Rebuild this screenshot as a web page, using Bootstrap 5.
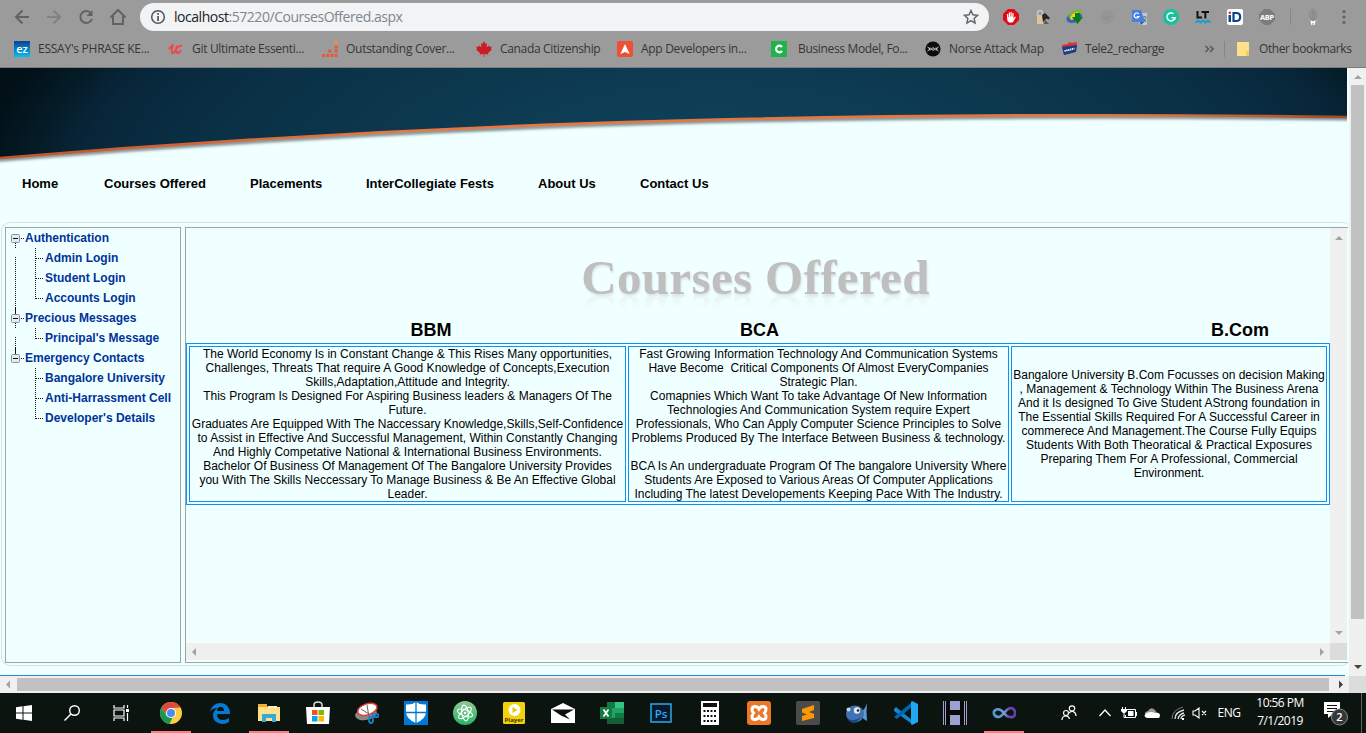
<!DOCTYPE html>
<html lang="en">
<head>
<meta charset="utf-8">
<meta name="viewport" content="width=device-width, initial-scale=1">
<title>Courses Offered</title>
<link href="https://cdn.jsdelivr.net/npm/bootstrap@5.3.0/dist/css/bootstrap.min.css" rel="stylesheet">
<script src="https://cdn.jsdelivr.net/npm/bootstrap@5.3.0/dist/js/bootstrap.bundle.min.js"></script>
<style>
html,body{width:1366px;height:733px;overflow:hidden}
body{background:#f0ffff;font-family:"Liberation Sans",Arial,sans-serif;font-size:12px;line-height:14px;color:#000}
svg{display:block;flex:none}
.chrome{height:68px;background:#9b9b9b;border-bottom:1px solid #7c7c7c;font-family:"Open Sans","Noto Sans",sans-serif}
.toolrow{height:34px;padding-left:6px}
.slot{width:32px;height:34px;display:flex;align-items:center;justify-content:center;flex:none}
.omni{width:849px;height:28px;margin-left:6px;background:#f1f3f4;border-radius:14px;padding:0 10px;font-size:14px;color:#80868b;letter-spacing:-.46px}
.omni b{font-weight:400;color:#202124}
.marks{height:33px;padding-left:14px;font-size:12px;color:#33363a;white-space:nowrap}
.bm{display:flex;align-items:center;gap:8px;height:30px;flex:none}
.browser-page{height:608px}
.sheet{width:1349px;height:608px;background:#f0ffff}
.hero{height:100px}
.topnav{display:grid;grid-template-columns:82px 146px 116px 172px 102px 90px;padding:8px 0 0 22px;height:54px;font-weight:700;font-size:13px;line-height:15px;white-space:nowrap}
.topnav a,.tree a{color:inherit;text-decoration:none}
.frame{height:444px;margin-left:1px;width:1348px;border:1px solid #d9dfe1;border-right:0;border-radius:9px 6px 8px 9px;padding:4px 0 0 3px}
.side{width:176px;height:436px;border:1px solid #9aa6a8;padding-left:5px;margin-right:4px}
.view{width:1163px;height:436px;border:1px solid #9aa6a8;border-right:0}
.tree{font-weight:700;color:#039;white-space:nowrap}
.tree div{display:flex;align-items:center;height:20px}
.canvas{width:1144px;height:415px}
.wordart{height:87px;padding-top:22px;padding-right:5px;text-align:center;font:700 49px/56px "Liberation Serif",serif;color:#bfbfbf}
.wordart span{display:inline-block;letter-spacing:.35px;text-shadow:1px 2px 2px #dbe6e6;-webkit-box-reflect:below -22px linear-gradient(transparent 55%,rgba(0,0,0,.3))}
.heads{display:grid;grid-template-columns:329.5px 471px 100px;padding-left:224.5px;height:28px;font-weight:700;font-size:18px;line-height:30px}
.courses{width:1144px;border:1px solid #0c92f5;border-collapse:separate;border-spacing:2px;table-layout:fixed;text-align:center}
.courses td{border:1px solid #0c92f5;padding:0;white-space:nowrap;vertical-align:middle}
.c1{width:437px}.c2{width:381px}.c3{width:316px}
.bar{background:#f0f0f0;display:flex;justify-content:space-between;align-items:center}
.bar.v{width:17px;flex-direction:column}
.bar.h{height:17px}
.corner{width:17px;height:17px;background:#dcdcdc}
.thumb{background:#c1c1c1}
.taskbar{height:40px;background:#0c1410;color:#fff;font-family:"Open Sans","Noto Sans",sans-serif}
.app{width:49px;height:40px;display:flex;align-items:center;justify-content:center;flex:none}
.app.s{width:48px}
.app.s.w{width:50px}
.app.on{background:linear-gradient(#ff7c80,#ff7c80) 5px 100%/40px 2px no-repeat}
.tr{height:40px;display:flex;align-items:center;justify-content:center;flex:none}
</style>
</head>
<body>
<header class="chrome">
  <div class="toolrow d-flex align-items-center">
    <div class="slot"><svg width="16" height="16" fill="none" stroke="#5f6368" stroke-width="2"><path d="M15 8H2M8.500 1.500 2 8l6.500 6.500"/></svg></div>
    <div class="slot"><svg width="16" height="16" fill="none" stroke="#7f8183" stroke-width="2"><path d="M1 8h13M7.500 1.500 14 8l-6.500 6.500"/></svg></div>
    <div class="slot"><svg width="16" height="16" fill="none" stroke="#5f6368" stroke-width="2"><path d="M13 4.200A6 6 0 1 0 14 10"/><path d="M14.500 1v6h-6z" fill="#5f6368" stroke="none"/></svg></div>
    <div class="slot"><svg width="18" height="18" fill="none" stroke="#5f6368" stroke-width="2"><path d="M1.500 9.500 9 2l7.500 7.500M4 8v8h10V8"/></svg></div>
    <div class="omni d-flex align-items-center">
      <svg width="16" height="16"><circle cx="8" cy="8" r="6.300" fill="none" stroke="#4f5357" stroke-width="1.500"/><path d="M7.200 7h1.700v5H7.200zM7.200 4h1.700v1.700H7.200z" fill="#4f5357"/></svg>
      <span class="ms-2 flex-grow-1"><b>localhost</b>:57220/CoursesOffered.aspx</span>
      <svg width="16" height="16" fill="none" stroke="#5f6368" stroke-width="1.400"><path d="m8 1.500 1.900 4.300 4.700.5-3.500 3.100 1 4.600L8 11.600 3.900 14l1-4.600L1.400 6.300l4.700-.5z"/></svg>
    </div>
    <div class="d-flex" style="margin-left:6px">
      <div class="slot"><svg width="16" height="16"><path d="M5 0h6l5 5v6l-5 5H5l-5-5V5z" fill="#e30b13"/><path d="M4 8V5h1.200v3h.6V3.500H7V7.500h.5V3h1.200v4.500h.6V4h1.200v5.500l1.500-2 .8.700-2.600 4.500-1 .8H6.200L4.500 12z" fill="#fff"/></svg></div>
      <div class="slot"><svg width="16" height="16"><path d="M2.500 7V4a2.500 2.500 0 0 1 5 0v2" fill="none" stroke="#c9c9c4" stroke-width="1.500"/><path d="M2 6h6v9H2z" fill="#d9c49c"/><path d="m7 6 3-2 5 5-1.500 1.500-2-1L8 13z" fill="#292522"/><path d="m10 11 4 4H9z" fill="#5e574e"/></svg></div>
      <div class="slot"><svg width="18" height="18"><ellipse cx="8" cy="9.500" rx="8" ry="5" fill="#3465b6" transform="rotate(-20 8 9)"/><path d="M2 9Q5 2 11 2q5-1 5 3L6 11z" fill="#78b62c"/><path d="M4 11q2-7 8-7l1 4-7 4z" fill="#ecd728"/><path d="M9 5h5v4h3l-5.500 7L6 9h3z" fill="#087b22"/></svg></div>
      <div class="slot"><svg width="16" height="16"><circle cx="8" cy="8" r="7" fill="#969696"/><path d="m5 8 2 2 4-4" fill="none" stroke="#8f8f8f" stroke-width="1.600"/></svg></div>
      <div class="slot"><svg width="17" height="17"><path d="M6 4h10v12H9z" fill="#c4c8cc"/><path d="M1 1h9l4 12H1z" fill="#4681df"/><path d="m9 13 4 0-3 3z" fill="#2b51a8"/><path d="M7.700 5A2.500 2.500 0 1 0 8 7.500H5.600" fill="none" stroke="#fff" stroke-width="1.200"/><path d="M11.500 8h4M13.500 7v1M15 8.500q-.5 3-2.500 4M13 10l2.500 3" fill="none" stroke="#667c8d"/></svg></div>
      <div class="slot"><svg width="16" height="16"><circle cx="8" cy="8" r="8" fill="#15c39a"/><path d="M10.500 4.700A4 4 0 1 0 12 8.700H8.500M12 8.700 11.500 11" fill="none" stroke="#fff" stroke-width="1.500"/></svg></div>
      <div class="slot"><svg width="16" height="16"><path d="M2.500 2v6.500H7M6.500 3H14M10.300 3v6.500" fill="none" stroke="#111" stroke-width="2"/><path d="m.5 13.500 2.500-2 2.500 2 2.500-2 2.500 2 2.500-2 2.500 2" fill="none" stroke="#139ed5" stroke-width="1.800"/></svg></div>
      <div class="slot"><svg width="16" height="16"><rect width="16" height="16" rx="2" fill="#fff"/><path d="M1.500 6H4v7H1.500z" fill="#08468b"/><circle cx="2.800" cy="3.700" r="1.300" fill="#e62b28"/><path d="M6.500 4h2.700q4 0 4 4t-4 4H6.500z" fill="none" stroke="#08468b" stroke-width="2.200"/></svg></div>
      <div class="slot"><svg width="17" height="16"><path d="M5 0h6l5 5v6l-5 5H5l-5-5V5z" fill="#7c7c7c"/><text x="8" y="11" text-anchor="middle" font-size="7.500" font-weight="700" fill="#fff" letter-spacing="-.3">ABP</text></svg></div>
      <div class="slot" style="width:14px"><svg width="1" height="16"><path d="M0 0h1v16H0z" fill="#858585"/></svg></div>
      <div class="slot" style="width:31px"><svg width="16" height="18"><ellipse cx="8" cy="6.500" rx="4" ry="6" fill="#8b8b8b"/><path d="M6 1v9M10 1v9" stroke="#999" fill="none"/><path d="m3 11 3 3M13 11l-3 3" stroke="#aaa"/><path d="m6 13 1 4M10 13l-1 4M6 13l2 1.500 2-1.500" stroke="#fff" fill="none" stroke-width="1.300"/></svg></div>
      <div class="slot"><svg width="4" height="16" fill="#5f6368"><circle cx="2" cy="2.500" r="1.600"/><circle cx="2" cy="8" r="1.600"/><circle cx="2" cy="13.500" r="1.600"/></svg></div>
    </div>
  </div>
  <nav class="marks d-flex">
    <div class="bm" style="width:154px"><svg width="16" height="16"><defs><linearGradient id="ez" x2="0" y2="1"><stop stop-color="#0c4192"/><stop offset="1" stop-color="#08bdf1"/></linearGradient></defs><path d="M0 0h16v16H0z" fill="url(#ez)"/><text x="8" y="11.500" text-anchor="middle" font-size="11" font-weight="600" fill="#fff">ez</text></svg><span style="letter-spacing:-.25px">ESSAY's PHRASE KE...</span></div>
    <div class="bm" style="width:154px"><svg width="16" height="16"><path d="M1 8q2.500-3 4-4.500Q2.500 12 5 12q2 0 4-7.500Q7 12 9.500 12q2 0 3.500-3M8 7.500q3-3 6-3" fill="none" stroke="#ea4a50" stroke-width="2"/></svg><span style="letter-spacing:-.31px">Git Ultimate Essenti...</span></div>
    <div class="bm" style="width:154px"><svg width="16" height="16" fill="#f0533b"><path d="M0 13h3v3H0zM4.200 13h3v3h-3zM8.400 13h3v3h-3zM12.600 13h3v3h-3zM6.300 8.500h3v3h-3zM12.600 8.500h3v3h-3zM12.600 4.500h3v3h-3z"/><path d="M12.600 0h3v3h-3z" fill="#f7931e"/></svg><span style="letter-spacing:-.28px">Outstanding Cover...</span></div>
    <div class="bm" style="width:141px"><svg width="16" height="16"><path d="m8 0 1.500 3 1.500-.7-.5 4L13 4.500l.4 1.300 2.300-.3-.8 2.500 1.100.6L12 12l.4 1.500-4-.5v3h-.8v-3l-4 .5L4 12 0 8.600 1.100 8 .3 5.500l2.300.3L3 4.500l2.500 1.800-.5-4 1.500.7z" fill="#cb1c23"/></svg><span style="letter-spacing:-.34px">Canada Citizenship</span></div>
    <div class="bm" style="width:154px"><svg width="16" height="16"><rect width="16" height="16" rx="2" fill="#ed5032"/><path d="m8 3 4.700 10L8 11l-4.700 2z" fill="#fff"/></svg><span style="letter-spacing:-.3px">App Developers in...</span></div>
    <div class="bm" style="width:154px;gap:11px"><svg width="16" height="16"><path d="M0 0h16v16H0z" fill="#1db54a"/><path d="M11 6A3.300 3.300 0 1 0 11 10" fill="none" stroke="#fff" stroke-width="2.200"/></svg><span style="letter-spacing:-.34px">Business Model, Fo...</span></div>
    <div class="bm" style="width:136px"><svg width="16" height="16"><circle cx="8" cy="8" r="7.600" fill="#090b0c"/><path d="m2.500 6 2.500 2-2.500 2M13.500 6 11 8l2.500 2M5 6.500l3 3 3-3M5 9.500l3-3 3 3" fill="none" stroke="#ddd"/></svg><span style="letter-spacing:-.3px">Norse Attack Map</span></div>
    <div class="bm" style="width:143px"><svg width="17" height="16"><path d="m1 4 6-1 1-2 3 1 5-1-1 9-12 4z" fill="#df2f36"/><path d="m1 6 15-2-1 7-12 3z" fill="#193c83"/><path d="m3.500 10 10-2.500" stroke="#fff" stroke-width="1.800" stroke-dasharray="1.300 .6"/></svg><span style="letter-spacing:-.4px;margin-left:-1px">Tele2_recharge</span></div>
    <div class="bm"><svg width="10" height="8" fill="none" stroke="#565b60" stroke-width="1.600"><path d="m1.500 1 3 3-3 3M6 1l3 3-3 3"/></svg></div>
    <div class="bm" style="margin-left:10px"><svg width="1" height="16"><path d="M0 0h1v16H0z" fill="#858585"/></svg></div>
    <div class="bm" style="margin-left:11px;gap:9px"><svg width="14" height="16"><path d="M1 1h12v14H1z" fill="#ffe08a"/><path d="M10 10h3v5h-3z" fill="#f6cc4c"/></svg><span style="letter-spacing:-.4px">Other bookmarks</span></div>
  </nav>
</header>

<main class="browser-page d-flex">
  <div class="d-flex flex-column">
    <div class="sheet">
      <div class="hero"><svg width="1347" height="100">
        <defs><radialGradient id="sea" gradientUnits="userSpaceOnUse" cx="0" cy="0" r="1" gradientTransform="translate(715 110) scale(735 300)"><stop stop-color="#0e4560"/><stop offset=".35" stop-color="#0d3b52"/><stop offset=".7" stop-color="#0a3045"/><stop offset=".86" stop-color="#08263a"/><stop offset=".94" stop-color="#041a24"/><stop offset="1" stop-color="#021018"/></radialGradient>
        <linearGradient id="rim"><stop stop-color="#bd542f"/><stop offset=".3" stop-color="#e97640"/><stop offset=".85" stop-color="#e5743e"/><stop offset="1" stop-color="#9a4d2c"/></linearGradient>
        <filter id="soft" x="-5%" y="-20%" width="110%" height="150%"><feGaussianBlur stdDeviation="1.500"/></filter></defs>
        <path d="M-5 92C350 63 750 42.500 1352 50.500" fill="none" stroke="#6f7b7d" stroke-width="3.500" filter="url(#soft)"/>
        <path d="M0 0H1347V49C750 41 350 61 0 90z" fill="url(#sea)"/>
        <path d="M0 90C350 61 750 41 1347 49" fill="none" stroke="url(#rim)" stroke-width="2.600"/></svg></div>
      <nav class="topnav"><a href="#">Home</a><a href="#">Courses Offered</a><a href="#">Placements</a><a href="#">InterCollegiate Fests</a><a href="#">About Us</a><a href="#">Contact Us</a></nav>
      <section class="frame d-flex">
        <aside class="side d-flex">
          <svg width="14" height="200" fill="none"><g stroke="#111" stroke-dasharray="1 1"><path d="M4.500 15v5M4.500 29v63M4.500 95v5M4.500 109v20M10 10.500h4M10 90.500h4M10 130.500h4"/></g><path d="M4.500 79v7M4.500 119v7" stroke="#111"/><g fill="#eceae4" stroke="#7b93b4"><rect x=".5" y="6.500" width="8" height="8" rx="1"/><rect x=".5" y="86.500" width="8" height="8" rx="1"/><rect x=".5" y="126.500" width="8" height="8" rx="1"/></g><path d="M2 10.500h5M2 90.500h5M2 130.500h5" stroke="#111"/></svg>
          <div class="tree">
            <div><a href="#">Authentication</a></div>
            <div><svg width="20" height="20" stroke="#111" stroke-dasharray="1 1"><path d="M10.500 0v20M11 10.500h8"/></svg><a href="#">Admin Login</a></div>
            <div><svg width="20" height="20" stroke="#111" stroke-dasharray="1 1"><path d="M10.500 0v20M11 10.500h8"/></svg><a href="#">Student Login</a></div>
            <div><svg width="20" height="20" stroke="#111" stroke-dasharray="1 1"><path d="M10.500 0v11M11 10.500h8"/></svg><a href="#">Accounts Login</a></div>
            <div><a href="#">Precious Messages</a></div>
            <div><svg width="20" height="20" stroke="#111" stroke-dasharray="1 1"><path d="M10.500 0v11M11 10.500h8"/></svg><a href="#">Principal's Message</a></div>
            <div><a href="#">Emergency Contacts</a></div>
            <div><svg width="20" height="20" stroke="#111" stroke-dasharray="1 1"><path d="M10.500 0v20M11 10.500h8"/></svg><a href="#">Bangalore University</a></div>
            <div><svg width="20" height="20" stroke="#111" stroke-dasharray="1 1"><path d="M10.500 0v20M11 10.500h8"/></svg><a href="#">Anti-Harrassment Cell</a></div>
            <div><svg width="20" height="20" stroke="#111" stroke-dasharray="1 1"><path d="M10.500 0v11M11 10.500h8"/></svg><a href="#">Developer's Details</a></div>
          </div>
        </aside>
        <div class="view">
          <div class="d-flex">
            <div class="canvas">
              <div class="wordart"><span>Courses Offered</span></div>
              <div class="heads"><span>BBM</span><span>BCA</span><span>B.Com</span></div>
              <table class="courses"><tr>
<td class="c1">The World Economy Is in Constant Change &amp; This Rises Many opportunities,<br>Challenges, Threats That require A Good Knowledge of Concepts,Execution<br>Skills,Adaptation,Attitude and Integrity.<br>This Program Is Designed For Aspiring Business leaders &amp; Managers Of The<br>Future.<br>Graduates Are Equipped With The Naccessary Knowledge,Skills,Self-Confidence<br>to Assist in Effective And Successful Management, Within Constantly Changing<br>And Highly Competative National &amp; International Business Environments.<br>Bachelor Of Business Of Management Of The Bangalore University Provides<br>you With The Skills Neccessary To Manage Business &amp; Be An Effective Global<br>Leader.</td>
<td class="c2">Fast Growing Information Technology And Communication Systems<br>Have Become&nbsp; Critical Components Of Almost EveryCompanies<br>Strategic Plan.<br>Comapnies Which Want To take Advantage Of New Information<br>Technologies And Communication System require Expert<br>Professionals, Who Can Apply Computer Science Principles to Solve<br>Problems Produced By The Interface Between Business &amp; technology.<br><br>BCA Is An undergraduate Program Of The bangalore University Where<br>Students Are Exposed to Various Areas Of Computer Applications<br>Including The latest Developements Keeping Pace With The Industry.</td>
<td class="c3">Bangalore University B.Com Focusses on decision Making<br>, Management &amp; Technology Within The Business Arena<br>And it Is designed To Give Student AStrong foundation in<br>The Essential Skills Required For A Successful Career in<br>commerece And Management.The Course Fully Equips<br>Students With Both Theoratical &amp; Practical Exposures<br>Preparing Them For A Professional, Commercial<br>Environment.</td>
              </tr></table>
            </div>
            <div class="bar v py-2"><svg width="8" height="4" fill="#a3a3a3"><path d="M0 4 4 0l4 4z"/></svg><svg width="8" height="4" fill="#a3a3a3"><path d="M0 0h8L4 4z"/></svg></div>
          </div>
          <div class="d-flex"><div class="bar h" style="width:1144px;padding:0 6px"><svg width="4" height="8" fill="#a3a3a3"><path d="M4 0v8L0 4z"/></svg><svg width="4" height="8" fill="#a3a3a3"><path d="M0 0v8l4-4z"/></svg></div><div class="corner"></div></div>
        </div>
      </section>
      <div style="height:9px"></div>
      <div style="height:1px;width:1345px;background:#2d83dc"></div>
    </div>
  </div>
  <div class="bar v"><svg width="17" height="17"><path d="m5 11 4-4 4 4z" fill="#a3a3a3"/></svg><div class="thumb flex-grow-1 mb-auto" style="width:13px;max-height:534px"></div><svg width="17" height="17"><path d="M5 6h8L9 10z" fill="#444"/></svg></div>
</main>
<div class="d-flex"><div class="bar h" style="width:1349px"><svg width="17" height="17"><path d="M10 4.500v8l-4-4z" fill="#a3a3a3"/></svg><div class="thumb" style="height:13px;width:1312px;margin-right:auto"></div><svg width="17" height="17"><path d="M7 4.500v8l4-4z" fill="#444"/></svg></div><div class="corner"></div></div>

<footer class="taskbar d-flex">
  <div class="app s"><svg width="16" height="16" fill="#fff"><path d="m0 2.300 6.500-1v6.200H0zM7.500 1.200 16 0v7.500H7.500zM0 8.500h6.500v6.200L0 13.700zM7.500 8.500H16V16l-8.500-1.200z"/></svg></div>
  <div class="app s"><svg width="16" height="16" fill="none" stroke="#fff" stroke-width="1.400"><circle cx="10.500" cy="5.500" r="4.800"/><path d="m7 9-6.500 6.500"/></svg></div>
  <div class="app s w"><svg width="17" height="16" fill="none" stroke="#fff" stroke-width="1.200"><path d="M1 0v3h10V0M1 16v-3h10v3M1 5h10v6H1zM14.500 0v3M14.500 8v8"/><path d="M13 4h3v3h-3z" fill="#fff" stroke="none"/></svg></div>
  <div class="app on"><svg width="22" height="22"><circle cx="11" cy="11" r="11" fill="#ffcd42"/><path d="M1.500 5.500A11 11 0 0 1 20.500 5.500L11 6 6.500 13.500z" fill="#dc4b3e"/><path d="M1.500 5.500 6.500 14l6 1.500-3 6.500A11 11 0 0 1 1.500 5.500z" fill="#149857"/><circle cx="11" cy="11" r="5" fill="#fff"/><circle cx="11" cy="11" r="4" fill="#4d8bf5"/></svg></div>
  <div class="app"><svg width="22" height="22"><path d="M1 10Q3 1 12 1q9 1 9 11H8q0 6 6 6 3 0 6-2v4q-3 2-7 2-9-1-9-9 0-4 5-7-6 0-8 4zm7-1h7q0-4-3.500-4T8 9z" fill="#0878d5"/></svg></div>
  <div class="app on"><svg width="22" height="20"><path d="M0 2h8l2 2h12v14H0z" fill="#ffe08b"/><path d="M0 1h9v3H0z" fill="#f3ae29"/><path d="M10 3h9v2h-9z" fill="#fff2bd"/><path d="M4 19v-8h14v8h-4v-4H8v4z" fill="#38a9d7"/></svg></div>
  <div class="app"><svg width="24" height="24"><path d="M8 7V4q0-3 4-3t4 3v3" fill="none" stroke="#ddd" stroke-width="1.500"/><path d="M0 6h24l-1 17H1z" fill="#fff"/><path d="M6 9h5.500v5H6z" fill="#f25022"/><path d="M12.500 9H18v5h-5.500z" fill="#7fba00"/><path d="M6 15h5.500v5.500H6z" fill="#00a4ef"/><path d="M12.500 15H18v5.500h-5.500z" fill="#ffb900"/></svg></div>
  <div class="app"><svg width="24" height="22"><ellipse cx="11" cy="12" rx="11" ry="6" fill="#898989" transform="rotate(-12 11 12)"/><ellipse cx="12.500" cy="7.500" rx="10" ry="5.500" fill="#fff" stroke="#e33e3c" stroke-width="1.500" transform="rotate(-18 12 8)"/><path d="m6 7 8 5M12 3l2 12" stroke="#666"/><ellipse cx="16" cy="18" rx="2" ry="3" fill="none" stroke="#1780c3" stroke-width="1.800"/><ellipse cx="20.500" cy="13.500" rx="3" ry="1.700" fill="none" stroke="#1780c3" stroke-width="1.800"/></svg></div>
  <div class="app"><svg width="24" height="24"><path d="M0 0h24v24H0z" fill="#0078d7"/><path d="M12 1q4 3 10 2.500V11q0 7-10 11Q2 18 2 11V3.500Q8 4 12 1z" fill="#fff"/><path d="M12 1v21M1 11.500h22" stroke="#0078d7" stroke-width="1.300"/></svg></div>
  <div class="app"><svg width="24" height="24"><defs><linearGradient id="atom" x2="0" y2="1"><stop stop-color="#8fca94"/><stop offset="1" stop-color="#24b565"/></linearGradient></defs><circle cx="12" cy="12" r="12" fill="url(#atom)"/><g fill="none" stroke="#fff" stroke-width="1.100"><ellipse cx="12" cy="12" rx="3.200" ry="8" transform="rotate(-10 12 12)"/><ellipse cx="12" cy="12" rx="3.200" ry="8" transform="rotate(50 12 12)"/><ellipse cx="12" cy="12" rx="3.200" ry="8" transform="rotate(110 12 12)"/></g><circle cx="12" cy="12" r="1.200" fill="#fff"/></svg></div>
  <div class="app"><svg width="22" height="22"><rect width="22" height="22" rx="1.500" fill="#f3d20c"/><circle cx="11.500" cy="8" r="6" fill="#fff"/><path d="m9.500 5 5 3-5 3z" fill="#efc400"/><text x="11" y="20" text-anchor="middle" font-size="6" font-weight="700" fill="#3c3505">Player</text></svg></div>
  <div class="app"><svg width="24" height="20"><path d="m0 6 12-6 12 6v14H0z" fill="#fff"/><path d="m1 6.500 22 0-9 5 5 5-9-4z" fill="#0b1110"/></svg></div>
  <div class="app"><svg width="24" height="22"><path d="M7 0h17v22H7z" fill="#21a366"/><path d="M7 0h8v6H7zM15 11h9v5h-9z" fill="#107c41"/><path d="M15 0h9v6h-9z" fill="#33c481"/><path d="M7 16h17v6H7z" fill="#185c37"/><path d="M0 5h12v12H0z" fill="#107c41"/><path d="m3.500 7.500 5 7M8.500 7.500l-5 7" stroke="#fff" stroke-width="1.800"/></svg></div>
  <div class="app"><svg width="22" height="20"><path d="M1 1h20v18H1z" fill="#071b2c" stroke="#31a8df" stroke-width="1.500"/><text x="11" y="14.500" text-anchor="middle" font-size="11.500" fill="#31a8ff" font-weight="600">Ps</text></svg></div>
  <div class="app"><svg width="18" height="24"><path d="M0 0h18v24H0z" fill="#fff"/><path d="M2 2h14v4H2z" fill="#111"/><path d="M2.500 10h14M2.500 15h14M2.500 20h14" stroke="#111" stroke-width="2.200" stroke-dasharray="2 1.500"/></svg></div>
  <div class="app"><svg width="24" height="24"><rect width="24" height="24" rx="3" fill="#ed7728"/><path d="M8 5.500q2.500 0 4 2.500 1.500-2.500 4-2.500 3 0 3 3 0 2-1.500 3.500Q19 13.500 19 15.500q0 3-3 3-2.500 0-4-2.500-1.500 2.500-4 2.500-3 0-3-3Q5 13.500 6.500 12 5 10.500 5 8.500q0-3 3-3z" fill="none" stroke="#fff" stroke-width="3"/></svg></div>
  <div class="app"><svg width="24" height="24"><rect width="24" height="24" rx="2" fill="#4b4b4b"/><path d="m6 8 12-4v5l-5 2 5 2v4L6 20v-5l5-1.500-5-2z" fill="#ff9800"/></svg></div>
  <div class="app"><svg width="24" height="22"><path d="M16 9q4-1 6-8-1 9 0 18-3-1-6-5z" fill="#5e9bd3"/><ellipse cx="10" cy="12" rx="9" ry="8.500" fill="#3e72b4"/><path d="M2 16q7 5 14-1-4 6-9 6-3-1-5-5z" fill="#1d437d"/><circle cx="12" cy="8.500" r="3.200" fill="#e5eaf0"/><circle cx="13" cy="8.500" r="1.300" fill="#222"/><circle cx="3.500" cy="7.500" r="2" fill="#c3d8e6"/></svg></div>
  <div class="app"><svg width="24" height="24"><path d="m0 8 2-2 16 13v4L0 10z" fill="#1287d1"/><path d="m0 16 18-15v5L3 18z" fill="#0065a9"/><path d="m18 0 6 3v18l-6 3-1-1V1z" fill="#24a7f2"/></svg></div>
  <div class="app"><svg width="24" height="24"><path d="M0 0h24v24H0z" fill="#9da0d0"/><path d="M1 0h1v24H1zM3 0h4v24H3zM17 0h4v24h-4zM22 0h1v24h-1zM7 9h10v5H7z" fill="#090909"/></svg></div>
  <div class="app on"><svg width="24" height="14"><defs><linearGradient id="vs"><stop stop-color="#4b9acb"/><stop offset=".5" stop-color="#6ba1d3"/><stop offset=".7" stop-color="#7345b4"/><stop offset="1" stop-color="#6541a8"/></linearGradient></defs><path d="M12 7Q8 2.500 4.500 3.500 1 5 2 8t5 3q2-.5 5-4t6-5q5 0 5 5t-5 4q-3 0-6-4z" fill="none" stroke="url(#vs)" stroke-width="2.600"/></svg></div>
  <div class="tr" style="margin-left:32px;width:18px"><svg width="16" height="16" fill="none" stroke="#fff" stroke-width="1.200"><circle cx="11" cy="3.500" r="2.700"/><circle cx="5" cy="8" r="2.500"/><path d="M1 15q0-4 4-4 3 0 3.500 3M8 8q2-2 4-1.500 3 1 3 4.500"/></svg></div>
  <div class="tr" style="margin-left:19px;width:15px"><svg width="12" height="8" fill="none" stroke="#fff" stroke-width="1.300"><path d="m.5 7 5.500-6 5.500 6"/></svg></div>
  <div class="tr" style="margin-left:8px;width:17px"><svg width="16" height="12" fill="none" stroke="#fff"><path d="M5 2.500h9.500v8H4.500V8M1.500 0v2M4.500 0v2M3 6v4.500h2"/><path d="M0 2h6v2L4 6H2L0 4zM7 4h5.500v5H7zM15 5h1v4h-1z" fill="#fff" stroke="none"/></svg></div>
  <div class="tr" style="margin-left:7px;width:17px"><svg width="17" height="12"><path d="M2 10Q-1 5 4 4q3-5 7-1l2 3z" fill="#999"/><path d="M3 11q-5-2 0-5 4-2 8 0 5-1 5 3l-1 2z" fill="#fff"/></svg></div>
  <div class="tr" style="margin-left:8px;width:17px"><svg width="14" height="14" fill="none"><path d="M1 13Q1 4 12 1" stroke="#777"/><path d="M4 13q0-7 9-9M7 13q1-5 6-6M10 13q0-3 4-4" stroke="#ddd" stroke-width="1.300"/><path d="M11 12h2v2h-2z" fill="#fff"/></svg></div>
  <div class="tr" style="margin-left:5px;width:18px"><svg width="16" height="12" fill="none" stroke="#fff" stroke-width="1.100"><path d="M1 4h2l4-3v10L3 8H1zM10 4l4 4M14 4l-4 4"/></svg></div>
  <div class="tr" style="margin-left:5px;width:30px;font-size:12px;letter-spacing:-.4px">ENG</div>
  <div class="tr text-center" style="margin-left:6px;width:60px;height:38px;font-size:12px;line-height:18px;letter-spacing:-.55px;white-space:nowrap">10:56 PM<br>7/1/2019</div>
  <div class="tr" style="margin-left:14px;width:25px"><svg width="25" height="26"><path d="M0 2h16v12H9l-5 4v-4H0z" fill="#fff"/><path d="M3 5.500h10M3 8.500h10M3 11.500h7" stroke="#111"/><circle cx="15.500" cy="17" r="8" fill="#343836" stroke="#888"/><text x="15.500" y="21" text-anchor="middle" font-size="11" font-weight="600" fill="#fff">2</text></svg></div>
  <div style="margin-left:12px;width:1px;background:#5c605d"></div>
</footer>
</body>
</html>
